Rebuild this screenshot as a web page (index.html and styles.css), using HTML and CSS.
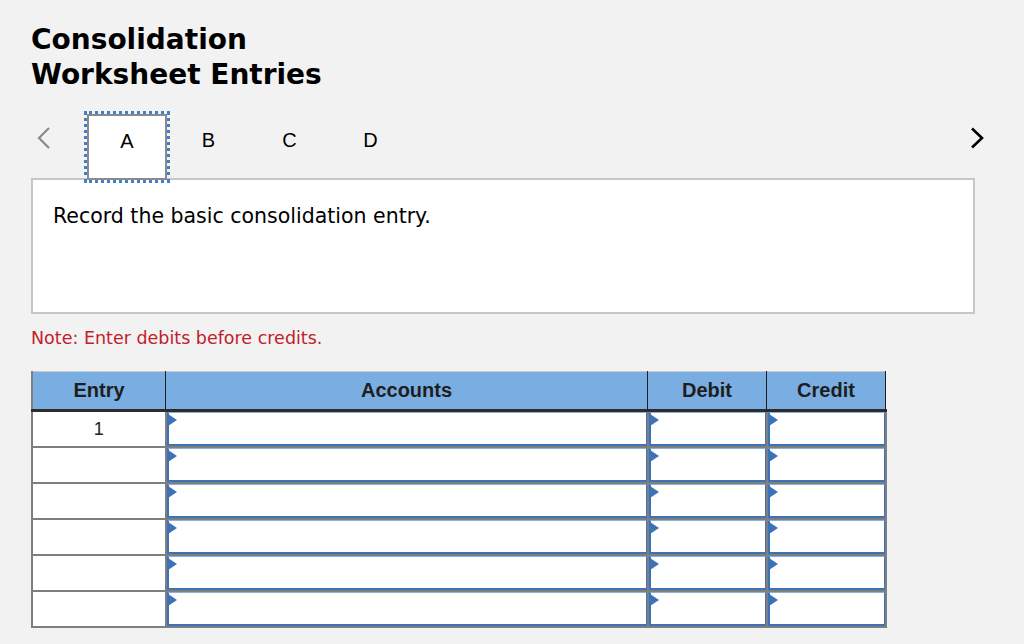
FILE: index.html
```html
<!DOCTYPE html>
<html>
<head>
<meta charset="utf-8">
<link rel="stylesheet" href="styles.css">
</head>
<body>
<div class="page">
  <h1 class="title">Consolidation<br>Worksheet Entries</h1>
  <div class="tabbar">
    <div class="tabs">
      <span class="chev chev-left"><svg width="14" height="22" viewBox="0 0 14 22"><polyline points="12,1 2,11 12,21" fill="none" stroke="#8a8a8a" stroke-width="2.2"/></svg></span>
      <div class="tab active">A</div>
      <div class="tab">B</div>
      <div class="tab">C</div>
      <div class="tab">D</div>
    </div>
    <span class="chev chev-right"><svg width="14" height="22" viewBox="0 0 14 22"><polyline points="2,1.5 12,11 2,20.5" fill="none" stroke="#000" stroke-width="2.6"/></svg></span>
  </div>
  <div class="panel">
    <p class="prompt">Record the basic consolidation entry.</p>
  </div>
  <p class="note">Note: Enter debits before credits.</p>
  <table class="grid">
    <thead>
      <tr>
        <th class="c-entry">Entry</th>
        <th class="c-acc">Accounts</th>
        <th class="c-num">Debit</th>
        <th class="c-num">Credit</th>
      </tr>
    </thead>
    <tbody>
      <tr><td class="entry">1</td><td class="in"><div class="box"></div></td><td class="in"><div class="box"></div></td><td class="in"><div class="box"></div></td></tr>
      <tr><td class="entry"></td><td class="in"><div class="box"></div></td><td class="in"><div class="box"></div></td><td class="in"><div class="box"></div></td></tr>
      <tr><td class="entry"></td><td class="in"><div class="box"></div></td><td class="in"><div class="box"></div></td><td class="in"><div class="box"></div></td></tr>
      <tr><td class="entry"></td><td class="in"><div class="box"></div></td><td class="in"><div class="box"></div></td><td class="in"><div class="box"></div></td></tr>
      <tr><td class="entry"></td><td class="in"><div class="box"></div></td><td class="in"><div class="box"></div></td><td class="in"><div class="box"></div></td></tr>
      <tr><td class="entry"></td><td class="in"><div class="box"></div></td><td class="in"><div class="box"></div></td><td class="in"><div class="box"></div></td></tr>
    </tbody>
  </table>
</div>
</body>
</html>
```

FILE: styles.css
```css
html, body {
  margin: 0;
  padding: 0;
  background: #f2f2f2;
}
.page {
  padding: 22px 0 0 31px;
  width: 955px;
  font-family: "DejaVu Sans", Verdana, sans-serif;
  color: #000;
}
.title {
  margin: 0;
  font-size: 28px;
  line-height: 35px;
  font-weight: bold;
}
.tabbar {
  margin-top: 20px;
  display: flex;
  align-items: center;
  justify-content: space-between;
  height: 68px;
  position: relative;
  z-index: 2;
}
.tabs {
  display: flex;
  align-items: center;
  height: 100%;
}
.chev {
  display: flex;
  align-items: center;
  padding-bottom: 16px;
}
.chev-left {
  width: 56px;
  padding-left: 6px;
  box-sizing: border-box;
}
.chev-right {
  margin-right: 2px;
}
.tab {
  width: 81px;
  height: 66px;
  display: flex;
  align-items: center;
  justify-content: center;
  padding-bottom: 12px;
  font-family: "Liberation Sans", Arial, sans-serif;
  font-size: 20px;
  box-sizing: border-box;
}
.tab.active {
  width: 80px;
  margin-right: 1px;
  background: #fff;
  border: 2px solid #8a8a8a;
  outline: 3px dotted #3f7fcc;
  outline-offset: 0;
  height: 66px;
  align-self: flex-end;
}
.panel {
  margin-top: -2px;
  width: 944px;
  height: 136px;
  box-sizing: border-box;
  background: #fff;
  border: 2px solid #c6c6c6;
  position: relative;
  z-index: 1;
}
.prompt {
  margin: 0;
  padding: 24px 0 0 20px;
  font-size: 20.5px;
  line-height: 24px;
}
.note {
  margin: 14px 0 0 0;
  color: #c0202b;
  font-size: 17.5px;
  line-height: 20px;
}
.grid {
  margin-top: 23px;
  border-collapse: collapse;
  table-layout: fixed;
  width: 854px;
  font-family: "Liberation Sans", Arial, sans-serif;
  font-size: 20px;
}
.grid th {
  background: #7aade1;
  color: #1e1e1e;
  font-weight: bold;
  height: 37px;
  padding: 0;
  border-top: 1px solid #c8c8c8;
  border-left: 1px solid #1e1e1e;
  border-right: 1px solid #1e1e1e;
  border-bottom: 3px solid #2c2c2c;
}
.grid th.c-entry { width: 132px; border-left: 2px solid #808080; }
.grid th.c-acc { width: 481px; }
.grid th.c-num { width: 118px; }
.grid td {
  padding: 0;
  border: 2px solid #7f7f7f;
  background: #fff;
  vertical-align: top;
}
.grid td.entry {
  text-align: center;
  vertical-align: middle;
  color: #1e1e1e;
  font-size: 18px;
}
.grid td.in {
  padding: 0;
}
.box {
  position: relative;
  height: 31px;
  border-top: 1px solid #8db0dc;
  border-left: 2px solid #3d72b6;
  border-right: 1px solid #3d72b6;
  border-bottom: 2px solid #3d72b6;
  background: #fff;
}
.box::before {
  content: "";
  position: absolute;
  left: -1px;
  top: 1px;
  width: 0;
  height: 0;
  border-top: 6px solid transparent;
  border-bottom: 6px solid transparent;
  border-left: 9px solid #3d72b6;
}
```
